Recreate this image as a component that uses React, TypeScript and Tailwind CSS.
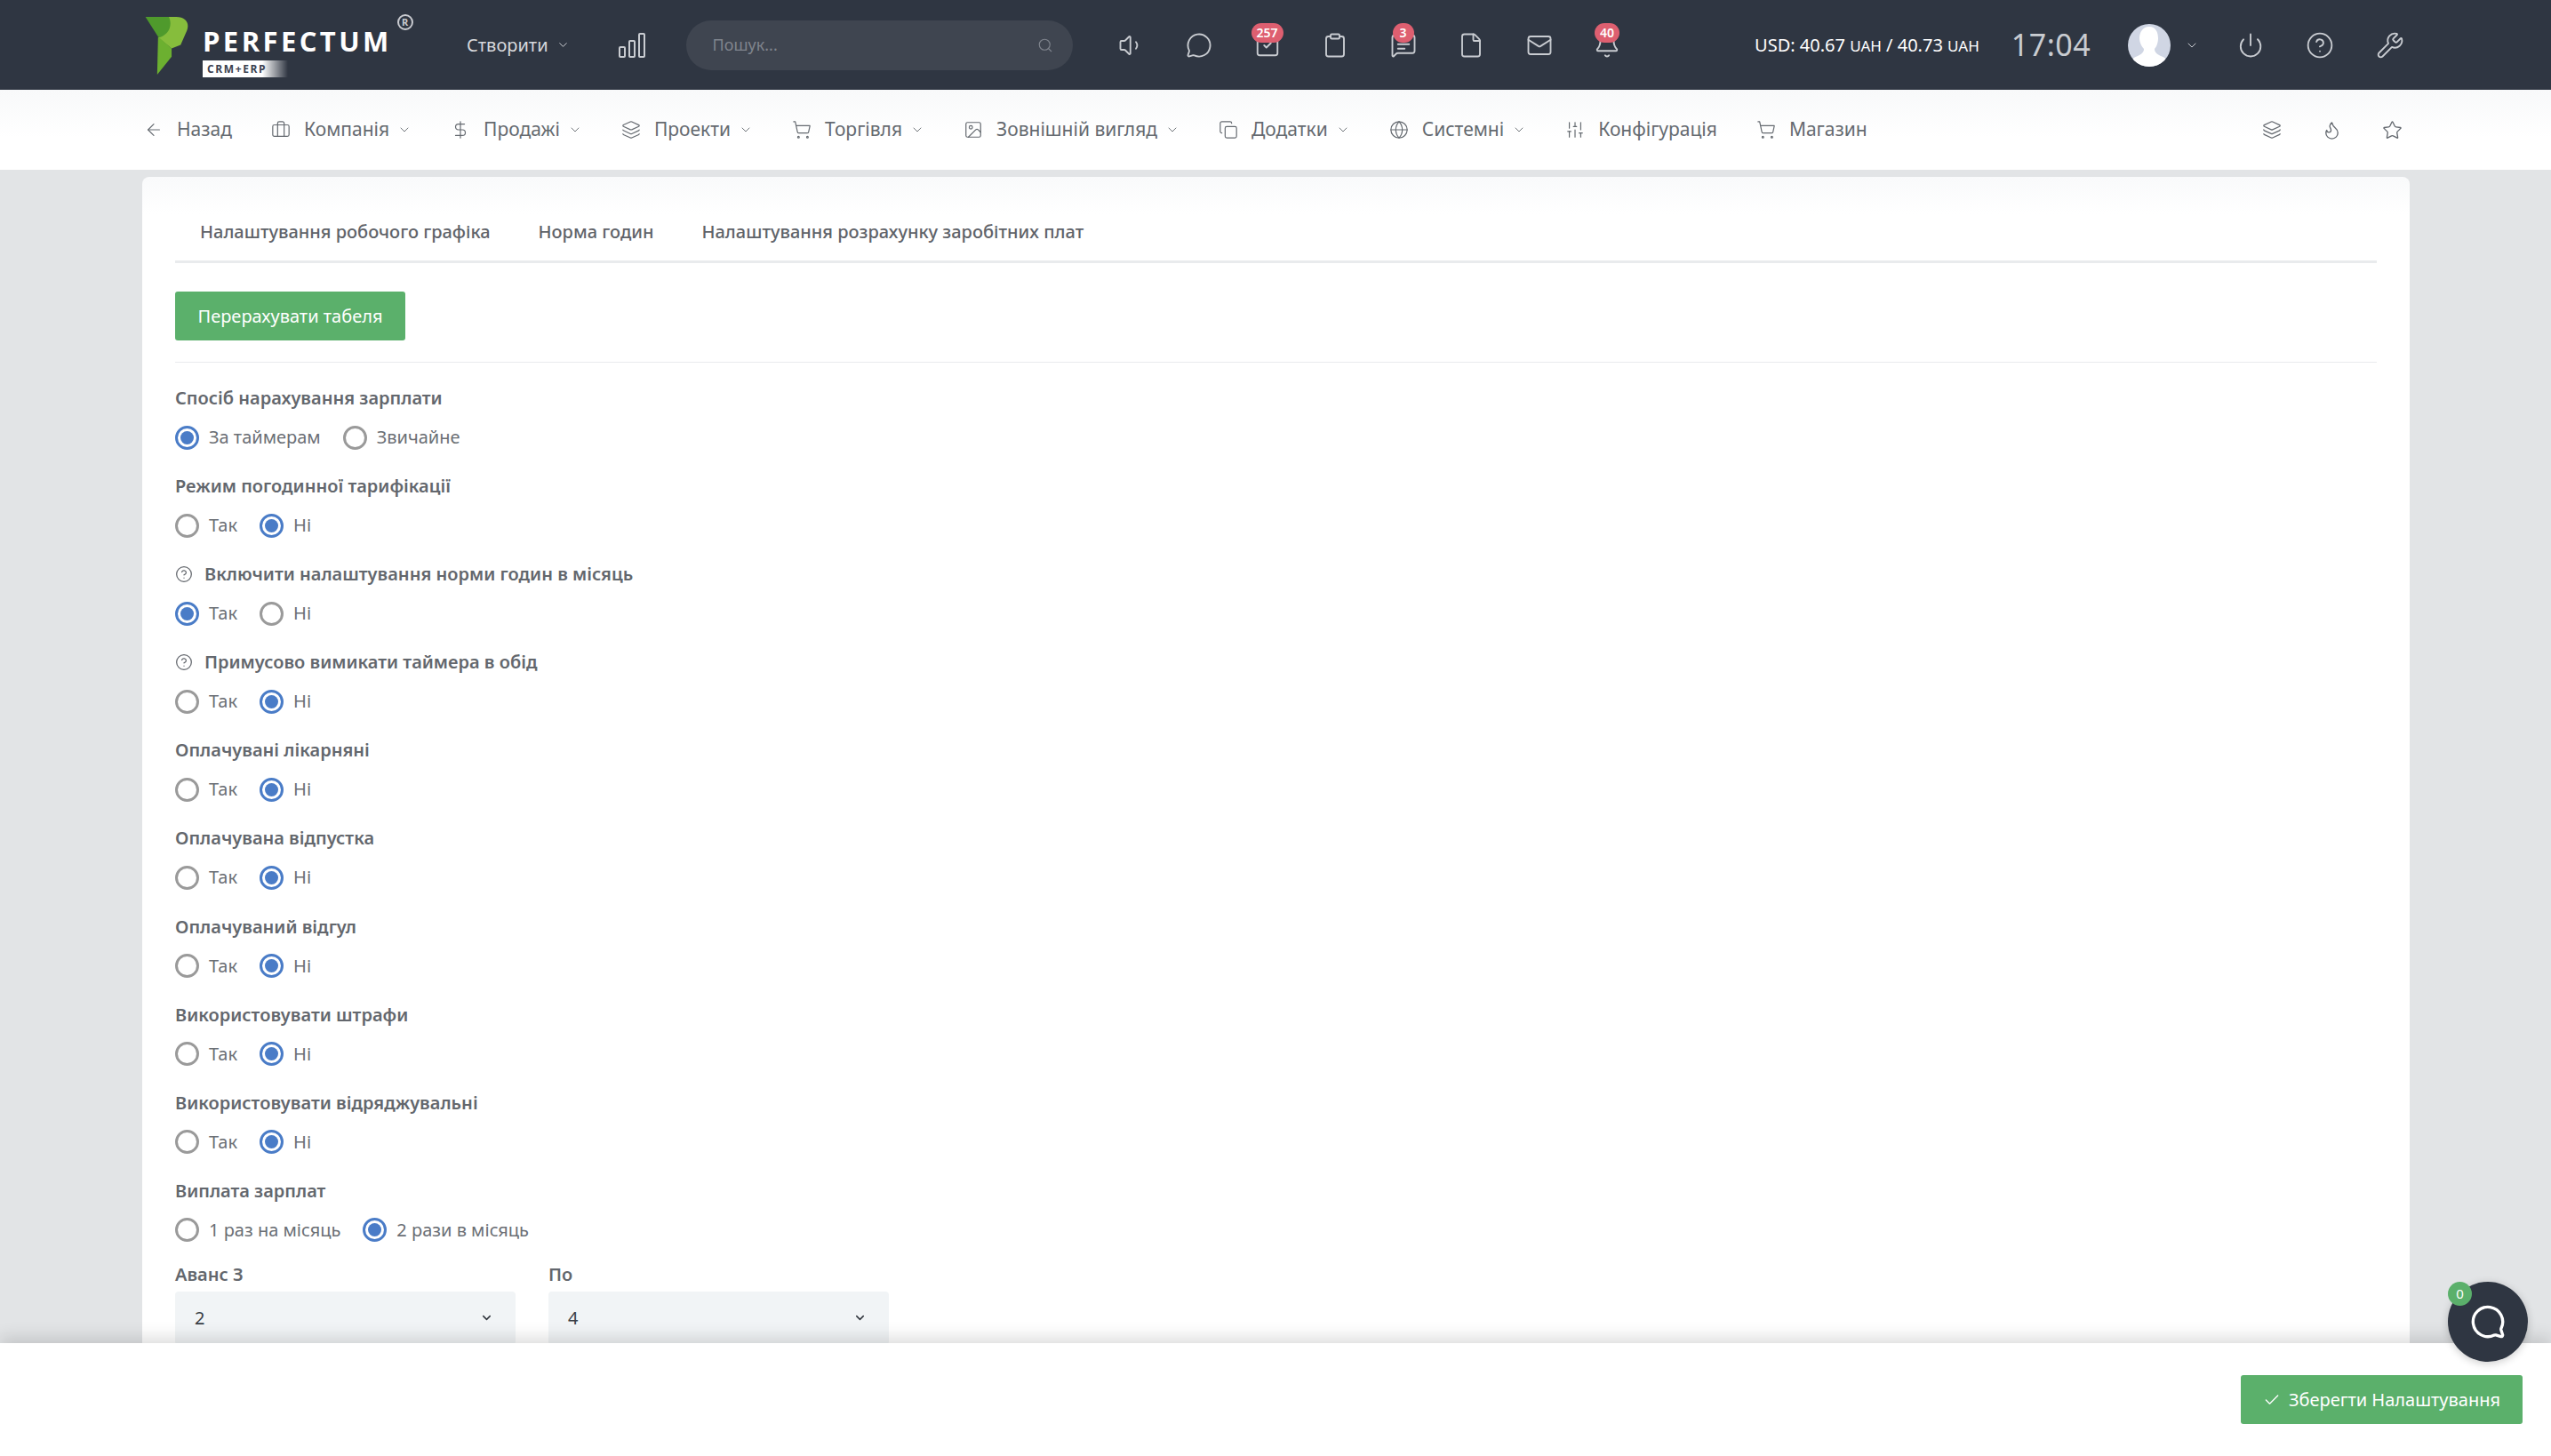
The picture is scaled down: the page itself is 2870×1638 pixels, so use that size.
import {
  ArrowLeft,
  Bell,
  Briefcase,
  Check,
  ChevronDown,
  CircleHelp,
  Clipboard,
  Copy,
  DollarSign,
  File,
  Flame,
  Globe,
  Image,
  Layers,
  Mail,
  MessageCircle,
  MessageSquareText,
  Power,
  Search,
  ShoppingCart,
  SlidersVertical,
  SquareCheck,
  Star,
  Volume1,
  Wrench,
} from "lucide-react";

const navItems = [
  { label: "Назад", icon: ArrowLeft },
  { label: "Компанія", icon: Briefcase, caret: true },
  { label: "Продажі", icon: DollarSign, caret: true },
  { label: "Проекти", icon: Layers, caret: true },
  { label: "Торгівля", icon: ShoppingCart, caret: true },
  { label: "Зовнішній вигляд", icon: Image, caret: true },
  { label: "Додатки", icon: Copy, caret: true },
  { label: "Системні", icon: Globe, caret: true },
  { label: "Конфігурація", icon: SlidersVertical },
  { label: "Магазин", icon: ShoppingCart },
];

const topIcons = [
  { icon: Volume1 },
  { icon: MessageCircle },
  { icon: SquareCheck, badge: "257" },
  { icon: Clipboard },
  { icon: MessageSquareText, badge: "3" },
  { icon: File },
  { icon: Mail },
  { icon: Bell, badge: "40" },
];

const settings = [
  { label: "Спосіб нарахування зарплати", options: ["За таймерам", "Звичайне"], selected: 0 },
  { label: "Режим погодинної тарифікації", options: ["Так", "Ні"], selected: 1 },
  { label: "Включити налаштування норми годин в місяць", options: ["Так", "Ні"], selected: 0, hint: true },
  { label: "Примусово вимикати таймера в обід", options: ["Так", "Ні"], selected: 1, hint: true },
  { label: "Оплачувані лікарняні", options: ["Так", "Ні"], selected: 1 },
  { label: "Оплачувана відпустка", options: ["Так", "Ні"], selected: 1 },
  { label: "Оплачуваний відгул", options: ["Так", "Ні"], selected: 1 },
  { label: "Використовувати штрафи", options: ["Так", "Ні"], selected: 1 },
  { label: "Використовувати відряджувальні", options: ["Так", "Ні"], selected: 1 },
  { label: "Виплата зарплат", options: ["1 раз на місяць", "2 рази в місяць"], selected: 1 },
];

function Logo() {
  return (
    <div className="flex items-start w-[320px] h-[101px] shrink-0">
      <svg width="50" height="66" viewBox="0 0 48 65" className="mt-[19px] ml-[3px] shrink-0">
        <path d="M0 0H34L30 16L29 32L14 22Z" fill="#4f9a2c" />
        <path d="M26 0H34C45 0 49 7 46 15L39 31L29 35L14 23C24 21 31 11 26 0Z" fill="#86bd3c" />
        <path d="M14 22L29 35V44L13 64Z" fill="#6cb030" />
      </svg>
      <div className="ml-[15px] mt-[33px] relative">
        <div className="font-['Open_Sans',sans-serif] font-bold text-[31px] leading-[27px] tracking-[3.4px] text-white">
          PERFECTUM
        </div>
        <div className="mt-[8px] w-[96px] h-[19px] bg-gradient-to-r from-white from-70% to-transparent pl-[5px] font-['Open_Sans',sans-serif] font-bold text-[12px] leading-[19px] tracking-[1.6px] text-[#3a4150]">
          CRM+ERP
        </div>
        <div className="absolute -right-[24px] -top-[17px] w-[18px] h-[18px] rounded-full border-2 border-[#c9cbd0] text-[#c9cbd0] text-[11px] leading-[14px] text-center font-bold">
          R
        </div>
      </div>
    </div>
  );
}

function TopBar() {
  return (
    <header className="h-[101px] shrink-0 bg-[#2f3642] flex items-center pl-[160px] pr-[165px]">
      <Logo />
      <div className="ml-[45px] flex items-center text-[#d7d9dd] text-[20px]">
        <span>Створити</span>
        <ChevronDown className="ml-[9px] w-[15px] h-[15px]" strokeWidth={1.5} />
      </div>
      <svg width="30" height="30" viewBox="0 0 30 30" fill="none" stroke="#c9ccd1" strokeWidth="2" className="ml-[55px] shrink-0">
        <rect x="1" y="17" width="6" height="11" rx="1" />
        <rect x="12" y="10" width="6" height="18" rx="1" />
        <rect x="23" y="2" width="6" height="26" rx="1" />
      </svg>
      <div className="ml-[46px] w-[435px] h-[56px] shrink-0 rounded-full bg-[#3f4550] flex items-center justify-between pl-[30px] pr-[22px]">
        <span className="text-[#7f848d] text-[18px]">Пошук...</span>
        <Search className="w-[18px] h-[18px] text-[#7f848d]" strokeWidth={1.5} />
      </div>
      <div className="ml-[51px] flex items-center gap-[46.5px] shrink-0">
        {topIcons.map(({ icon: Icon, badge }, i) => (
          <div key={i} className="relative w-[30px] h-[30px]">
            <Icon className="w-[30px] h-[30px] text-[#c9ccd1]" strokeWidth={1.5} />
            {badge && (
              <span className="absolute left-1/2 -translate-x-1/2 -top-[10px] min-w-[24px] h-[22px] px-[6px] rounded-full bg-[#de5f70] text-white text-[14px] leading-[22px] font-semibold text-center">
                {badge}
              </span>
            )}
          </div>
        ))}
      </div>
      <div className="ml-[151px] text-white text-[20px] whitespace-nowrap shrink-0">
        USD: 40.67 <span className="text-[17px]">UAH</span> / 40.73 <span className="text-[17px]">UAH</span>
      </div>
      <div className="ml-[36px] text-[#c9ccd1] text-[34px] tracking-[0.5px] shrink-0">17:04</div>
      <div className="ml-[42px] w-[48px] h-[48px] shrink-0 rounded-full bg-[#d0d6e4] overflow-hidden">
        <svg viewBox="0 0 48 48" className="w-full h-full">
          <path d="M24 3c7 0 10 6 10 13 0 5-2 10-4 12 0 4 3 6 7 8 5 2 8 4 9 12H2c1-8 4-10 9-12 4-2 7-4 7-8-2-2-5-7-5-12C13 9 17 3 24 3Z" fill="#fff" />
        </svg>
      </div>
      <ChevronDown className="ml-[16px] w-[16px] h-[16px] text-[#c9ccd1] shrink-0" strokeWidth={1.5} />
      <div className="ml-[43px] flex items-center gap-[47px] text-[#c9ccd1] shrink-0">
        <Power className="w-[30px] h-[30px]" strokeWidth={1.5} />
        <CircleHelp className="w-[32px] h-[32px]" strokeWidth={1.4} />
        <Wrench className="w-[32px] h-[32px]" strokeWidth={1.4} />
      </div>
    </header>
  );
}

function NavBar() {
  return (
    <nav className="h-[90px] shrink-0 bg-gradient-to-b from-[#f8f9fa] to-white to-60% flex items-center justify-between pl-[162px] pr-[167px] text-[#656a70]">
      <div className="flex items-center gap-[44px]">
        {navItems.map(({ label, icon: Icon, caret }) => (
          <div key={label} className="flex items-center">
            <Icon className="w-[22px] h-[22px] shrink-0" strokeWidth={1.3} />
            <span className="ml-[15px] text-[21px] whitespace-nowrap">{label}</span>
            {caret && <ChevronDown className="ml-[9px] w-[16px] h-[16px] shrink-0" strokeWidth={1.4} />}
          </div>
        ))}
      </div>
      <div className="flex items-center gap-[45px]">
        <Layers className="w-[22px] h-[22px]" strokeWidth={1.4} />
        <Flame className="w-[23px] h-[23px]" strokeWidth={1.4} />
        <Star className="w-[23px] h-[23px]" strokeWidth={1.4} />
      </div>
    </nav>
  );
}

function Radio({ checked, label }: { checked: boolean; label: string }) {
  return (
    <label className="flex items-center">
      <span
        className={
          checked
            ? "w-[27px] h-[27px] rounded-full border-[3px] border-[#4a7cc7] flex items-center justify-center shrink-0"
            : "w-[27px] h-[27px] rounded-full border-[3px] border-[#9a9a9a] shrink-0"
        }
      >
        {checked && <span className="w-[15px] h-[15px] rounded-full bg-[#4a7cc7]" />}
      </span>
      <span className="ml-[11px] text-[20px] text-[#6b6f75] whitespace-nowrap">{label}</span>
    </label>
  );
}

function Select({ label, value }: { label: string; value: string }) {
  return (
    <div className="w-[383px]">
      <div className="h-[29px] leading-[20px] text-[20px] font-semibold text-[#63676d]">{label}</div>
      <div className="h-[60px] mt-[0px] rounded-[4px] bg-[#f1f4f6] flex items-center justify-between pl-[22px] pr-[25px]">
        <span className="text-[20px] text-[#3a3f46]">{value}</span>
        <ChevronDown className="w-[15px] h-[15px] text-[#30353c]" strokeWidth={2.4} />
      </div>
    </div>
  );
}

function SettingsCard() {
  return (
    <section className="h-[1400px] rounded-t-[8px] bg-gradient-to-b from-[#f9fafb] to-white to-[3%] pl-[37px] pr-[37px]">
      <div className="h-[97px] border-b-[3px] border-[#e9ebed] flex items-center pt-[30px] pl-[28px] gap-[54px] text-[20px] font-medium text-[#5f6369]">
        <span>Налаштування робочого графіка</span>
        <span>Норма годин</span>
        <span>Налаштування розрахунку заробітних плат</span>
      </div>
      <button className="mt-[32px] block w-[259px] h-[55px] rounded-[3px] bg-[#5bb06b] text-white text-[20px]">
        Перерахувати табеля
      </button>
      <div className="mt-[24px] h-[1px] bg-[#e9ebed]" />
      <div className="mt-[25px]">
        {settings.map((s) => (
          <div key={s.label} className="h-[99.1px]">
            <div className="flex items-center h-[30px] text-[20px] font-semibold text-[#63676d]">
              {s.hint && <CircleHelp className="w-[20px] h-[20px] mr-[13px]" strokeWidth={1.5} />}
              {s.label}
            </div>
            <div className="mt-[14px] flex items-center gap-[25px]">
              {s.options.map((o, i) => (
                <Radio key={o} label={o} checked={i === s.selected} />
              ))}
            </div>
          </div>
        ))}
        <div className="flex gap-[37px]">
          <Select label="Аванс З" value="2" />
          <Select label="По" value="4" />
        </div>
      </div>
    </section>
  );
}

export default function App() {
  return (
    <div className="relative w-[2870px] h-[1638px] overflow-hidden bg-[#e2e4e6] flex flex-col font-['Noto_Sans',sans-serif]">
      <TopBar />
      <NavBar />
      <main className="flex-1 overflow-hidden pt-[8px] pl-[160px] pr-[159px]">
        <SettingsCard />
      </main>

      {/* save bar sits over the page */}
      <div className="absolute left-0 right-0 bottom-0 h-[127px] bg-white shadow-[0_-6px_18px_rgba(0,0,0,0.14)] flex items-center justify-end pr-[32px]">
        <button className="w-[317px] h-[55px] rounded-[3px] bg-[#5bb06b] text-white text-[20px] flex items-center justify-center">
          <Check className="w-[20px] h-[20px] mr-[9px]" strokeWidth={1.6} />
          Зберегти Налаштування
        </button>
      </div>

      <div className="absolute left-[2754px] top-[1442px] w-[90px] h-[90px] rounded-full bg-[#2f3642] shadow-[0_2px_10px_rgba(0,0,0,0.2)] flex items-center justify-center">
        <MessageCircle className="w-[40px] h-[40px] text-white scale-x-[-1]" strokeWidth={2} />
        <span className="absolute -left-[0px] -top-[0px] w-[27px] h-[27px] rounded-full bg-[#5bb06b] text-white text-[15px] leading-[27px] text-center">
          0
        </span>
      </div>
    </div>
  );
}
